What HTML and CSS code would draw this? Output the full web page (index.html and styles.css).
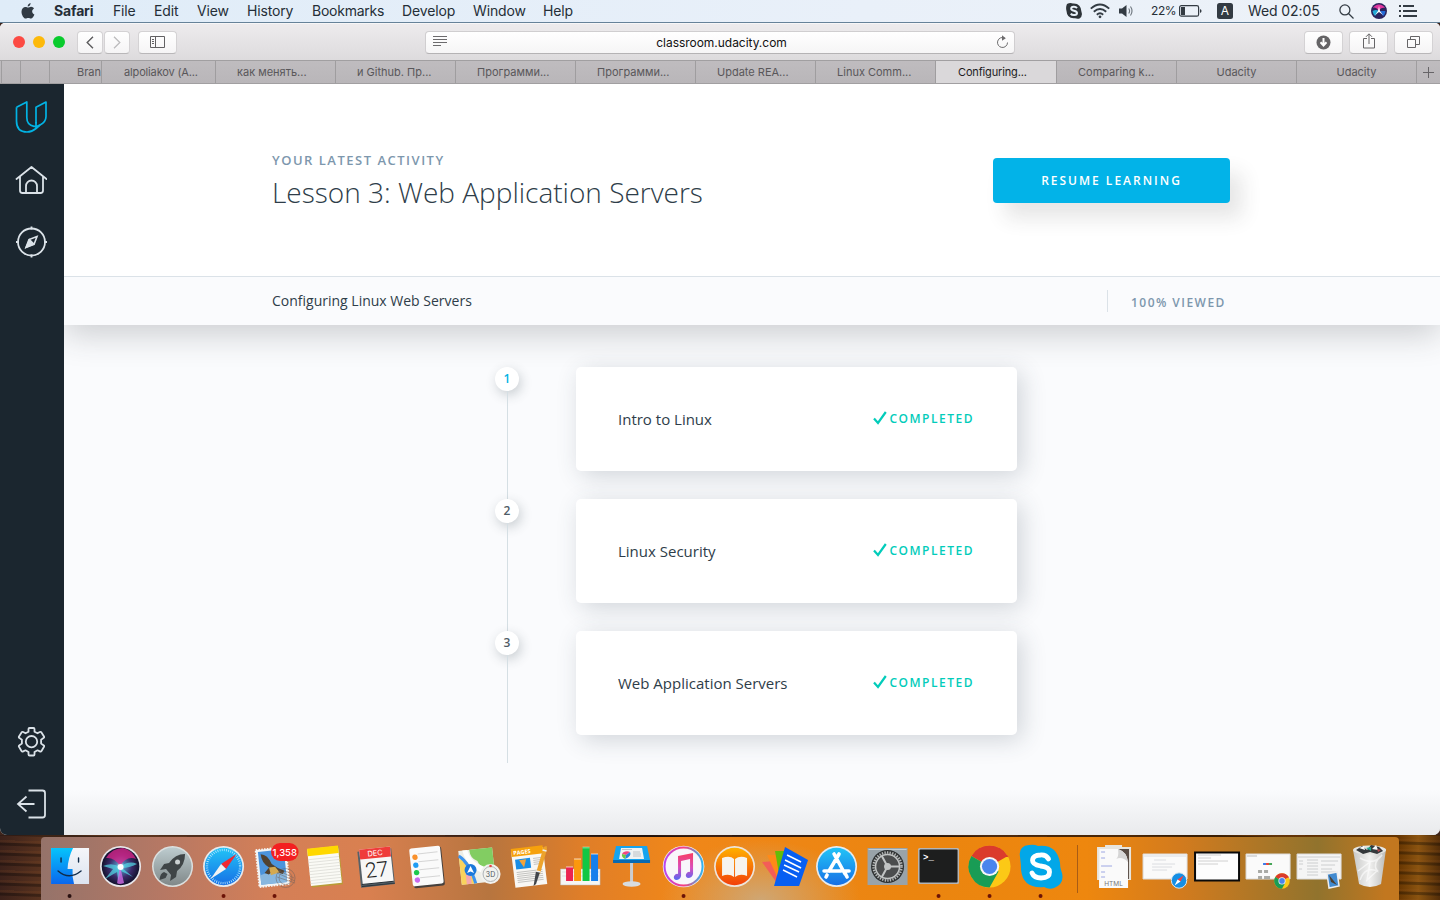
FILE: index.html
```html
<!DOCTYPE html>
<html lang="en">
<head>
<meta charset="utf-8">
<title>Udacity Classroom</title>
<link rel="stylesheet" href="styles.css">
</head>
<body>
<div class="desktop">
  <header class="menubar">
    <svg class="apple" width="14" height="16" viewBox="0 0 14 16"><path d="M9.6 0C9.700 1.800 8.300 3.500 6.700 3.500 6.500 1.800 8 .3 9.600 0zM7 4.600C7.800 4.600 8.700 3.800 10.100 3.800 11.300 3.900 12.400 4.500 13 5.400 10.300 7 10.800 10.400 13.400 11.400 12.700 13.400 11.300 15.600 10 15.600 8.900 15.600 8.500 15 7.300 15 6 15 5.600 15.600 4.600 15.600 2.800 15.600.5 12.100.5 8.800.5 5.600 2.500 3.900 4.400 3.900 5.600 3.900 6.300 4.600 7 4.600z" fill="#303a43"/></svg>
    <nav class="menus">
      <span class="m-app">Safari</span><span class="m-file">File</span><span class="m-edit">Edit</span><span class="m-view">View</span><span class="m-hist">History</span><span class="m-book">Bookmarks</span><span class="m-dev">Develop</span><span class="m-win">Window</span><span class="m-help">Help</span>
    </nav>
    <div class="status">
      <svg class="s-skype" width="16" height="16" viewBox="0 0 16 16"><path d="M1 1Q4-.5 7 .5 15 0 15.500 9 17 13 13.500 15.500 11 16 9 15.200 1 16 .5 8-.5 4 1 1z" fill="#2d3338"/><path d="M11 5.100C9.500 3.200 5.200 3.500 5.200 5.700 5.200 8.300 11 7.200 11 10 11 12.500 6.200 12.800 4.800 10.600" fill="none" stroke="#e8f0f8" stroke-width="2"/></svg>
      <svg class="s-wifi" width="20" height="16" viewBox="0 0 20 16" fill="none" stroke="#333b43" stroke-width="1.900"><path d="M.8 5.600Q10-2.600 19.200 5.600M3.800 8.700Q10 3.200 16.200 8.700M6.800 11.700Q10 9 13.200 11.700"/><circle cx="10" cy="13.800" r="1.400" fill="#333b43" stroke="none"/></svg>
      <svg class="s-vol" width="15" height="14" viewBox="0 0 15 14"><path d="M0 4.500h3L7.500 1v12L3 9.500H0z" fill="#333b43"/><path d="M9.700 4.500q1.800 2.500 0 5M11.500 2.500q3 4.500 0 9" fill="none" stroke="#6c747c" stroke-width="1.100"/></svg>
      <span class="battery-text">22%</span>
      <svg class="s-bat" width="23" height="12" viewBox="0 0 23 12"><rect x=".6" y=".6" width="19" height="10.600" rx="1.800" fill="none" stroke="#333b43" stroke-width="1.200"/><path d="M2 2h4v8H2z" fill="#333b43"/><path d="M21 4v4l1.400-1V5z" fill="#333b43"/></svg>
      <span class="input-source">A</span>
      <span class="clock">Wed 02:05</span>
      <svg class="s-search" width="15" height="15" viewBox="0 0 15 15" fill="none" stroke="#333b43" stroke-width="1.300"><circle cx="5.900" cy="5.900" r="5"/><path d="M9.500 9.500l5 5"/></svg>
      <svg class="s-siri" width="16" height="16" viewBox="0 0 16 16"><circle cx="8" cy="8" r="8" fill="#2b235c"/><path d="M2 5a7 7 0 0 1 12 0Q10 4 8 8 5 3 2 5z" fill="#e0359e"/><path d="M1.500 8Q5 6 8 8l-4 5Q2 11 1.500 8z" fill="#23a9d5"/><path d="M9 8l5.500 0Q14 12 12 13z" fill="#246bd7"/><path d="M8 3l1 5 3 4-4-3-4 3 3-4z" fill="#fff"/></svg>
      <svg class="s-list" width="18" height="12" viewBox="0 0 18 12" stroke="#333b43" stroke-width="1.900"><path d="M0 1h2M4 1h11M0 6h2M4 6h14M0 11h2M4 11h14"/></svg>
    </div>
  </header>

  <section class="window">
    <div class="toolbar">
      <div class="lights"><i class="red"></i><i class="yellow"></i><i class="green"></i></div>
      <div class="navbtns">
        <span class="btn nav"><svg width="8" height="13" viewBox="0 0 8 13" fill="none" stroke="#5d5c5e" stroke-width="1.400"><path d="M7 .8L1.200 6.500 7 12.200"/></svg></span>
        <span class="btn nav"><svg width="8" height="13" viewBox="0 0 8 13" fill="none" stroke="#bcbbbd" stroke-width="1.300"><path d="M1 .8l5.800 5.700L1 12.200"/></svg></span>
      </div>
      <span class="btn wide"><svg width="15" height="12" viewBox="0 0 15 12" fill="none" stroke="#626163"><path d="M.5.500h14v11H.5zM5.500.500v11M2 3.500h2M2 5.500h2M2 7.500h2"/></svg></span>
      <div class="address">
        <svg width="14" height="11" viewBox="0 0 14 11" stroke="#6c6b6d"><path d="M0 .5h14M0 3.500h14M0 6.500h14M0 9.500h8"/></svg>
        <span>classroom.udacity.com</span>
        <svg class="reload" width="13" height="14" viewBox="0 0 13 14" fill="none" stroke="#6c6b6d"><path d="M11.500 7.500a5 5 0 1 1-3-4.600"/><path d="M6 .3l3.800 2.900L6 5.800z" fill="#6c6b6d" stroke="none"/></svg>
      </div>
      <div class="actions">
        <span class="btn wide"><svg width="15" height="15" viewBox="0 0 15 15"><circle cx="7.500" cy="7.500" r="7" fill="#656466"/><path d="M7.500 3v7M4.500 7.300l3 3.200 3-3.200" fill="none" stroke="#fff" stroke-width="2"/></svg></span>
        <span class="btn wide"><svg class="share" width="12" height="16" viewBox="0 0 12 16" fill="none" stroke="#666567"><path d="M4 5.500H.5v9.500h11V5.500H8M6 11V1M3 3.800L6 .8l3 3"/></svg></span>
        <span class="btn wide"><svg width="13" height="12" viewBox="0 0 13 12" fill="none" stroke="#666567"><path d="M.5 3.500h8v8h-8zM3.500 3V.5h9v8H9"/></svg></span>
      </div>
    </div>
    <div class="tabs">
      <span class="tab t0"></span><span class="tab t1"></span><span class="tab t2"></span><span class="tab t3">Bran</span><span class="tab t4">alpoliakov (A...</span><span class="tab">как менять...</span><span class="tab">и Github. Пр...</span><span class="tab">Программи...</span><span class="tab">Программи...</span><span class="tab">Update REA...</span><span class="tab">Linux Comm...</span><span class="tab active">Configuring...</span><span class="tab">Comparing k...</span><span class="tab mid">Udacity</span><span class="tab mid">Udacity</span>
      <span class="plus"><svg width="11" height="11" viewBox="0 0 11 11" stroke="#666467"><path d="M5.500 0v11M0 5.500h11"/></svg></span>
    </div>

    <div class="page">
      <aside class="sidebar">
        <svg class="logo" width="32" height="32" viewBox="0 0 32 32" fill="none" stroke="#02b3e4" stroke-width="1.700" stroke-linejoin="round"><path d="M1.500 6.300L11.800 1V16.500Q11.800 24 19 25.300 22 25.800 25 24 31 21 31 15.500V1L21 6.300V22.500"/><path d="M1.500 6.300V20Q1.500 31 12 31 17 31 21 27.500L25 24M21 21V27.500"/></svg>
        <svg class="home" width="32" height="30" viewBox="0 0 32 30" fill="none" stroke="#dbe2e8" stroke-width="1.800" stroke-linejoin="round" stroke-linecap="round"><path d="M1.500 14L16.500 2l15 12M5 11.500V25.500Q5 28 7.500 28h18Q28 28 28 25.500V11.500M11 28V21a5.500 5.500 0 0 1 11 0v7"/></svg>
        <svg class="compass" width="32" height="32" viewBox="0 0 32 32" fill="none" stroke="#dbe2e8" stroke-width="1.800"><circle cx="16.500" cy="16" r="13.500"/><path d="M16.500 .5v3M16.500 28.500v3M1 16h3M29 16h3"/><path d="M22 10.500l-8 3-3 8 8-3z" stroke-width="1.600"/><path d="M14.500 14l2 2 2 2-7 3z" fill="#dbe2e8"/></svg>
        <svg class="gear" width="28" height="30" viewBox="0 0 28 30" fill="none" stroke="#dbe2e8" stroke-width="1.800" stroke-linejoin="round"><path d="M11.500 2Q11.500 1 12.500 1h4Q17.500 1 17.500 2v2.700L20.500 6.300 22.800 5Q23.800 4.500 24.300 5.300L27 9.500Q27.500 10.500 26.500 11.100L24.100 12.700v3.900L26.500 18.200Q27.500 18.900 27 19.800L24.500 24Q23.900 25 22.800 24.400L20.500 23.300 17.500 25V27.500Q17.500 28.500 16.500 28.500H12.500Q11.500 28.500 11.500 27.500V25L8.500 23.300 6.200 24.400Q5.100 25 4.500 24L2 19.800Q1.500 18.900 2.500 18.200L4.900 16.600V12.700L2.500 11.100Q1.500 10.500 2 9.500L4.700 5.300Q5.200 4.500 6.200 5L8.500 6.300 11.500 4.700z"/><circle cx="14.500" cy="14.700" r="5.700"/></svg>
        <svg class="exit" width="30" height="30" viewBox="0 0 30 30" fill="none" stroke="#dbe2e8" stroke-width="1.800"><path d="M12.500 1.500h14q2.500 0 2.500 2.500v22q0 2.500-2.500 2.500h-14M18.500 15H2.500M10.500 7.500L2 15l8.500 7.500"/></svg>
      </aside>
      <main class="content">
        <div class="hero">
          <div>
            <p class="eyebrow">YOUR LATEST ACTIVITY</p>
            <h1>Lesson 3: Web Application Servers</h1>
          </div>
          <a class="resume">RESUME LEARNING</a>
        </div>
        <div class="coursebar">
          <span class="course">Configuring Linux Web Servers</span>
          <span class="viewed">100% VIEWED</span>
        </div>
        <div class="lessons">
          <div class="row"><div class="rail"><b class="current">1</b></div><div class="card"><span>Intro to Linux</span><em><svg width="14" height="14" viewBox="0 0 14 14" fill="none" stroke="#02ccba" stroke-width="2.200"><path d="M1 7.500l4 4.500L12.800 1"/></svg>COMPLETED</em></div></div>
          <div class="row"><div class="rail"><b>2</b></div><div class="card"><span>Linux Security</span><em><svg width="14" height="14" viewBox="0 0 14 14" fill="none" stroke="#02ccba" stroke-width="2.200"><path d="M1 7.500l4 4.500L12.800 1"/></svg>COMPLETED</em></div></div>
          <div class="row"><div class="rail"><b>3</b></div><div class="card"><span>Web Application Servers</span><em><svg width="14" height="14" viewBox="0 0 14 14" fill="none" stroke="#02ccba" stroke-width="2.200"><path d="M1 7.500l4 4.500L12.800 1"/></svg>COMPLETED</em></div></div>
        </div>
      </main>
    </div>
  </section>

  <footer class="dockarea">
    <div class="dock">
      <svg class="slot" viewBox="0 0 51 63"><defs><linearGradient id="fb" x2="0" y2="1"><stop stop-color="#06c4fb"/><stop offset="1" stop-color="#0a67ee"/></linearGradient><linearGradient id="fw" x2="0" y2="1"><stop stop-color="#f5f6fa"/><stop offset="1" stop-color="#dce4f0"/></linearGradient></defs><path d="M7 11h38v36H7z" fill="url(#fw)"/><path d="M7 11h22Q24 21 23.500 32h5Q28 40 30 47H7z" fill="url(#fb)"/><path d="M17 21v4M34.500 21v4M14 34q11 9.500 23 0" fill="none" stroke="#102b49" stroke-width="1.400" stroke-linecap="round"/><circle cx="25.500" cy="59" r="2" fill="#291010"/></svg>
      <svg class="slot" viewBox="0 0 51 63"><defs><radialGradient id="siri"><stop stop-color="#e6fbff"/><stop offset=".25" stop-color="#4d7fb0"/><stop offset=".6" stop-color="#3a2a68"/><stop offset="1" stop-color="#12122c"/></radialGradient></defs><circle cx="25.500" cy="29.500" r="20.500" fill="#e9e7eb"/><circle cx="25.500" cy="29.500" r="18.800" fill="url(#siri)"/><path d="M11 21Q17 11 28 11q9 2 13 11-9-4-16 7-6-9-14-8z" fill="#df258c" opacity=".75"/><path d="M8 29q9-4 17 1 9-7 17-3-8 4-15 4l11 9-12-6-3 10-1-9-12 7 8-10z" fill="#52dce8" opacity=".7"/><path d="M25 29l4 17q-5 2-7 0z" fill="#d06be5" opacity=".8"/><circle cx="25.500" cy="30" r="3" fill="#fff"/></svg>
      <svg class="slot" viewBox="0 0 51 63"><defs><linearGradient id="silver" x2="0" y2="1"><stop stop-color="#bdcccf"/><stop offset="1" stop-color="#808889"/></linearGradient></defs><circle cx="25.500" cy="29.500" r="20.500" fill="#dce0df"/><circle cx="25.500" cy="29.500" r="19" fill="url(#silver)"/><path d="M38 17Q28 17 22 26l-5 1-4 6 6-1 5 6-1 6 6-4 1-6Q38 28 38 17zM17 35q-4 1-4.500 8l6-2 2-4z" fill="#3f4547"/><circle cx="30.500" cy="25" r="2.500" fill="#cbd1d2"/></svg>
      <svg class="slot" viewBox="0 0 51 63"><defs><linearGradient id="saf" x2="0" y2="1"><stop stop-color="#22c4f7"/><stop offset="1" stop-color="#176fe5"/></linearGradient></defs><circle cx="25.500" cy="29.500" r="20.500" fill="#e9eaec"/><circle cx="25.500" cy="29.500" r="18.800" fill="url(#saf)"/><circle cx="25.500" cy="29.500" r="16.600" fill="none" stroke="#b4e6ff" stroke-width="2.400" stroke-dasharray=".8 1.370"/><path d="M38.500 17L28 32l-5-5z" fill="#ef2932"/><path d="M12.500 42L28 32l-5-5z" fill="#f3f2f2"/><circle cx="25.500" cy="59" r="2" fill="#6b1307"/></svg>
      <svg class="slot" viewBox="0 0 51 63"><g transform="rotate(-6 24 30)"><path d="M8.500 11.500h30v37h-30z" fill="#f4f5f5" stroke="#f4f5f5" stroke-width="2" stroke-dasharray="1.600 1.200"/><path d="M10.500 13.500h26v33h-26z" fill="#4c94dc"/><path d="M10.500 37q13-4 26 0v9.500h-26z" fill="#88b7df"/><path d="M13 16q7 1 10 11 5 5 12 8l-2 3-9-4-5 3-4-2 5-5q-7-5-7-14z" fill="#51412f"/><path d="M20 30l6 0 4 6-9 2z" fill="#d5a94f"/></g><g fill="none" stroke="#6b605b" stroke-width=".8" opacity=".6"><circle cx="36.500" cy="41" r="9.500"/><circle cx="36.500" cy="41" r="6.500"/><path d="M28 36l18 8M28 40l18 6M30 34l15 7"/></g><rect x="22" y="6" width="27.500" height="18" rx="9" fill="#f31f21"/><text x="35.700" y="18.500" text-anchor="middle" class="badge-text">1,358</text><circle cx="25.500" cy="59" r="2" fill="#6b1307"/></svg>
      <svg class="slot" viewBox="0 0 51 63"><g transform="rotate(-6 25 30)"><path d="M10 11h31v38H10z" fill="#b99c36"/><path d="M9 10.500h31v37H9z" fill="#fafaf5"/><path d="M9 10h31v7.500H9z" fill="#ffd800"/><path d="M9 21h31M9 24h31M9 27h31M9 30h31M9 33h31M9 36h31M9 39h31M9 42h31M9 45h31" stroke="#ddddd8" stroke-width=".8"/></g></svg>
      <svg class="slot" viewBox="0 0 51 63"><g transform="rotate(-6 25 30)"><path d="M8 13h34v36H8z" fill="#566168"/><path d="M10 11h31v35H10z" fill="#f7f7f6"/><path d="M10 11h31v10H10z" fill="#ef3c3a"/><text x="25.500" y="18.800" text-anchor="middle" class="cal-month">DEC</text><text x="25.500" y="40" text-anchor="middle" class="cal-day">27</text><path d="M9 46h32M9 48h33" stroke="#293238"/></g></svg>
      <svg class="slot" viewBox="0 0 51 63"><g transform="rotate(-6 25 30)"><rect x="10" y="11" width="31" height="39" rx="2" fill="#46403d"/><rect x="9" y="10" width="31" height="38" rx="2" fill="#fafafa"/><path d="M17 16h20M17 24h20M17 32h20M17 40h20" stroke="#d5d5d5"/><circle cx="14" cy="19" r="2.700" fill="#f9912d"/><circle cx="14" cy="27" r="2.700" fill="#209cf3"/><circle cx="14" cy="34.500" r="2.700" fill="#1ec94b"/><circle cx="14" cy="42" r="2.700" fill="#ca68ed"/></g></svg>
      <svg class="slot" viewBox="0 0 51 63"><g transform="rotate(-6 25 30)"><path d="M7 12h34v34H7z" fill="#eeeee7"/><path d="M18 12h23v20q-14 1-16-8-7-3-7-12z" fill="#82cd62"/><path d="M7 20l8 4 7 22H7z" fill="#f9d35c"/><path d="M12 30h5v16h-5z" fill="#f5a8af"/><path d="M16 12q2 11 11 16t14 8v5Q14 34 11 12z" fill="#fff" opacity=".9"/><path d="M7 17q10 8 14 29" fill="none" stroke="#3d93ed" stroke-width="3"/></g><circle cx="17.500" cy="33" r="6" fill="#1c79db"/><path d="M17.500 29l-3.500 7 3.500-1.500L21 36z" fill="#fff"/><circle cx="37.500" cy="37" r="10" fill="#f2f2ef"/><circle cx="37.500" cy="37" r="7.500" fill="none" stroke="#b0b5b7"/><text x="37.500" y="39.500" text-anchor="middle" class="map-text">3D</text><circle cx="37.500" cy="29" r="1.300" fill="#e84340"/></svg>
      <svg class="slot" viewBox="0 0 51 63"><g transform="rotate(-7 25 30)"><path d="M9 12h32v37H9z" fill="#f8f7f4"/><path d="M9 10h32v8H9z" fill="#f6a10c"/><text x="11" y="16.300" class="pages-text">PAGES</text><path d="M12 21h15v10H12z" fill="#188de5"/><path d="M16 22l7 0-3 8z" fill="#f3a43b"/><path d="M30 22h9M30 24h9M30 26h9M30 28h9M12 34h26M12 36h26M12 38h26M12 40h26M12 42h26M12 44h26" stroke="#b9b9b6" stroke-width=".8"/></g><path d="M39.500 10l3-1 .5 3-7 25-4-1z" fill="#eda32c"/><path d="M32 34l4 1-4 12-2.500 2z" fill="#41454a"/><path d="M38.500 13l4 1M32 34l4.500 1" stroke="#eee" stroke-width="1.500"/></svg>
      <svg class="slot" viewBox="0 0 51 63"><path d="M5.500 32h39.500v16H5.500z" fill="#f5f5f3" stroke="#bbb" stroke-width=".5"/><path d="M7 35h37M7 39h37" stroke="#ddd"/><path d="M11 30h7v14h-7z" fill="#ec2450"/><path d="M19 22h7v22h-7z" fill="#fc980d"/><path d="M27.500 10h7v34h-7z" fill="#10c744"/><path d="M36 17h7v27h-7z" fill="#157fec"/><path d="M11 30h7M19 22h7M27.500 10.500h7M36 17h7" stroke="#fff" opacity=".35" stroke-width="2"/></svg>
      <svg class="slot" viewBox="0 0 51 63"><path d="M24 24h3v24h-3z" fill="#cbcdd0"/><ellipse cx="25.500" cy="47" rx="9" ry="2.700" fill="#d8dce0"/><path d="M10 9h31l3 14H7z" fill="#16a4ef"/><path d="M7 23h37v3H7z" fill="#0969b1"/><path d="M15 11h21l2 11H13z" fill="#f0f3f3"/><path d="M16 17a5 3 0 0 1 8-2l-4 3z" fill="#f24682"/><path d="M16 17l4 1-1 4q-4-2-3-5z" fill="#69c944"/><path d="M20 18l4-3q2 4-5 7z" fill="#2486dc"/><path d="M27 15h7M27 17h8M27 19h8M16 12.500h10" stroke="#b0b5ba" stroke-width=".8"/></svg>
      <svg class="slot" viewBox="0 0 51 63"><defs><linearGradient id="mus" x1="0" x2="1"><stop stop-color="#b847f0"/><stop offset=".5" stop-color="#fa3d7d"/><stop offset="1" stop-color="#32b5ef"/></linearGradient><linearGradient id="note" x2="0" y2="1"><stop stop-color="#f83d63"/><stop offset=".55" stop-color="#d94dbd"/><stop offset="1" stop-color="#5468f2"/></linearGradient></defs><circle cx="25.500" cy="29.500" r="20.800" fill="#eee"/><circle cx="25.500" cy="29.500" r="19" fill="#f8f7fb" stroke="url(#mus)" stroke-width="2"/><path d="M20 19l15-3v21q-1 4-5 4-3-1-2-4 2-3 4-2V22l-9 2v15q-1 4-5 4-3-1-2-4 2-3 4-2z" fill="url(#note)"/><circle cx="25.500" cy="59" r="2" fill="#6b1307"/></svg>
      <svg class="slot" viewBox="0 0 51 63"><defs><linearGradient id="books" x2="0" y2="1"><stop stop-color="#ffb000"/><stop offset="1" stop-color="#f2400b"/></linearGradient></defs><circle cx="25.500" cy="29.500" r="20.500" fill="#eee5dc"/><circle cx="25.500" cy="29.500" r="18.800" fill="url(#books)"/><path d="M13 21q8-3 12 1v18q-5-4-12-1zM26 22q5-4 12-1v18q-7-3-12 1z" fill="#f6f3ee"/></svg>
      <svg class="slot" viewBox="0 0 51 63"><path d="M2 25l14-1 3 25z" fill="#f35d58"/><path d="M7 18l13 0 2 31-3-5z" fill="#ff8a18"/><path d="M15 14l12 0-6 35z" fill="#63bd08"/><path d="M25 10l23 13-9 26H14z" fill="#075ff2"/><path d="M27 18l14 7M25 23l16 8M24 28l15 7M23 33l14 7" stroke="#fff" stroke-width="1.500"/></svg>
      <svg class="slot" viewBox="0 0 51 63"><circle cx="25.500" cy="29.500" r="20.500" fill="#e7ebef"/><circle cx="25.500" cy="29.500" r="18.800" fill="url(#saf)"/><path d="M23 17l11 20M28 17L18 34M13 34h17M33 34h5M16 38l-1 2M34 36l2 4" stroke="#fff" stroke-width="3.600" stroke-linecap="round"/></svg>
      <svg class="slot" viewBox="0 0 51 63"><path d="M5.500 11h40v37h-40z" fill="#99a3a9"/><path d="M6.500 12h38v1h-38z" fill="#c4cdd2"/><circle cx="25.500" cy="29.500" r="16.500" fill="#2d3031"/><circle cx="25.500" cy="29.500" r="14" fill="#4b4d4e" stroke="#b5b8b8" stroke-width="2.500" stroke-dasharray="1.300 1.300"/><circle cx="25.500" cy="29.500" r="12" fill="none" stroke="#c1c4c4" stroke-width="1.500"/><circle cx="25.500" cy="29.500" r="3.500" fill="#c1c4c4"/><path d="M25.500 29.500h12M25.500 29.500l-6-11M25.500 29.500l-6 11" stroke="#c1c4c4" stroke-width="2"/></svg>
      <svg class="slot" viewBox="0 0 51 63"><rect x="5" y="11" width="41" height="36" rx="1.500" fill="#b5b5b5"/><rect x="6.500" y="12.500" width="38" height="33" rx="1" fill="#1d1e1e"/><text x="10" y="23" class="term-text">&gt;_</text><circle cx="25.500" cy="59" r="2" fill="#6b1307"/></svg>
      <svg class="slot" viewBox="0 0 51 63"><g id="chrome"><circle cx="25.500" cy="29.500" r="21" fill="#fcc916"/><path d="M25.500 29.500L7.300 19a21 21 0 0 1 36.400 0z" fill="#db3b2c"/><path d="M25.500 29.500L7.300 19a21 21 0 0 0 18.200 31.500l9-16z" fill="#199c55"/><path d="M25.500 20h18.700L43 18H15z" fill="#db3b2c"/><circle cx="25.500" cy="29.500" r="9.600" fill="#f6f6f6"/><circle cx="25.500" cy="29.500" r="7.600" fill="#4985ed"/></g><circle cx="25.500" cy="59" r="2" fill="#6b1307"/></svg>
      <svg class="slot" viewBox="0 0 51 63"><path d="M5 20Q3 9 14 8q5-1 9 1 19-2 22 17 0 5 1 7 5 13-7 18-5 2-10-1Q8 52 6 33 6 27 5 20z" fill="#02a7e8"/><path d="M33.500 22Q31 17.500 25.500 18q-8 0-8 5.500 0 4 8 5.500 9 1 9 6 0 6-8.500 6-7 0-9-5" fill="none" stroke="#fff" stroke-width="4.800" stroke-linecap="round"/><circle cx="25.500" cy="59" r="2" fill="#6b1307"/></svg>
      <i class="divider"></i>
      <svg class="slot" viewBox="0 0 51 63"><path d="M9 10h8V8h17v2h9v33H9z" fill="#e7e5df"/><path d="M11 12h30v30H11z" fill="#584c45"/><path d="M11 12h19q9 3 10 13v26H11z" fill="#fafafa"/><path d="M30 12q1 8-2 10 6-3 12 3-1-10-10-13z" fill="#d6d6d6"/><path d="M13 15h4M13 21h4M13 29h11M13 35h4M13 40h4" stroke="#8793dd" stroke-width=".8"/><text x="25.500" y="49" text-anchor="middle" class="doc-text">HTML</text></svg>
      <svg class="slot" viewBox="0 0 51 63"><path d="M4 17h44v25H4z" fill="#fafafa" stroke="#ddd"/><path d="M5 19h42M15 23h12M13 27h23M13 30h20M13 33h15" stroke="#d3d6da" stroke-width=".8"/><circle cx="40" cy="43.500" r="7.700" fill="#168fe4" stroke="#dbe8ee"/><path d="M44.500 38.500l-3 6-3-2z" fill="#f34142"/><path d="M35.500 48.500l3-6 3 2z" fill="#fff"/></svg>
      <svg class="slot" viewBox="0 0 51 63"><rect x="4" y="15.500" width="44" height="28" fill="#fdfdfd" stroke="#090909" stroke-width="2"/><path d="M7 18h23M7 21h13M7 24h30M7 27h20" stroke="#c4c4c4" stroke-width=".8"/></svg>
      <svg class="slot" viewBox="0 0 51 63"><path d="M4 17h44v25H4z" fill="#fafafa" stroke="#ddd"/><path d="M5 19h10" stroke="#bbb"/><path d="M21 27h3" stroke="#3e7bea" stroke-width="2"/><path d="M24 27h3" stroke="#e84536" stroke-width="2"/><path d="M27 27h3" stroke="#45a658" stroke-width="2"/><path d="M16 33h4v3h-4zM22 33h4v3h-4zM16 39h4v3h-4zM22 39h6v3h-6z" fill="#a9aaa6"/><use href="#chrome" transform="translate(30.500 33) scale(.37)"/></svg>
      <svg class="slot" viewBox="0 0 51 63"><path d="M4 17h44v25H4z" fill="#f5f5f5" stroke="#ddd"/><path d="M5 20h42M6 24h4M6 27h4M6 32h3M14 23h11M14 26h11M14 29h11M14 32h11M14 35h11M14 38h11M28 24h17M28 28h14M28 32h11M28 35h15" stroke="#c8cbcc" stroke-width=".9"/><path d="M34 37l10-2 2 14-10 2z" fill="#428bd0" stroke="#eee" stroke-width="1.500"/><path d="M36 38l8 10-6-3z" fill="#4d4032"/></svg>
      <svg class="slot" viewBox="0 0 51 63"><defs><linearGradient id="trash"><stop stop-color="#c7c8c7"/><stop offset=".5" stop-color="#f1f1f0"/><stop offset="1" stop-color="#bcbcba"/></linearGradient></defs><path d="M9 13l33-1-5 35q-11 6-22 0z" fill="url(#trash)"/><ellipse cx="25.500" cy="13" rx="16.500" ry="4.500" fill="#e5e5e2"/><path d="M12 13l6-4 5 4 4-5 8 2 4 4-6 3-7-2-7 2z" fill="#34383b"/><path d="M15 11l5-2 1 4zM28 12l4-4 2 5z" fill="#f8f8f8"/><path d="M22 11l5-1 0 4z" fill="#21a893"/><path d="M33 12l4 1-3 2z" fill="#b74a4c"/><path d="M16 21q14 8 22-3-10 8-5 16-12-5-17 9M14 34l12-9-3 18 11-10" fill="none" stroke="#fff" opacity=".6" stroke-width="1.500"/></svg>
    </div>
  </footer>
</div>
</body>
</html>
```
FILE: styles.css
```css
* { box-sizing: border-box; }
body { margin: 0; font-family: "Open Sans", sans-serif; }
svg { display: block; flex: none; }
.desktop { width: 1440px; height: 900px; overflow: hidden; display: flex; flex-direction: column; background: #3d241b; }

.menubar { height: 23px; flex: none; display: flex; align-items: center; padding-left: 21px; background: linear-gradient(90deg, #dfecf8, #e9f0f9 60%, #edf2f8); border-bottom: 1px solid #668299; font: 14px/22px Inter, sans-serif; color: #252e37; }
.apple { margin-bottom: 1px; }
.menus { display: flex; margin-left: 19px; letter-spacing: -.15px; }
.menus span { white-space: nowrap; }
.m-app { width: 59px; font-weight: 700; letter-spacing: -.15px; }
.m-file { width: 41px; }
.m-edit { width: 43px; }
.m-view { width: 50px; }
.m-hist { width: 65px; }
.m-book { width: 90px; letter-spacing: -.25px; }
.m-dev { width: 71px; }
.m-win { width: 70px; }
.m-help { width: 40px; }
.status { display: flex; align-items: center; margin-left: auto; width: 374px; }
.s-wifi { margin-left: 8px; }
.s-vol { margin-left: 9px; }
.battery-text { margin-left: 17px; width: 28px; font-size: 12px; letter-spacing: -.4px; }
.input-source { width: 16px; height: 16px; margin-left: 15px; border-radius: 2.500px; background: #333b43; color: #fff; font-size: 12px; line-height: 16px; text-align: center; }
.clock { margin-left: 15px; width: 91px; letter-spacing: -.1px; white-space: nowrap; }
.s-siri { margin-left: 17px; }
.s-list { margin-left: 12px; }

.window { height: 812px; flex: none; display: flex; flex-direction: column; border-radius: 5px 5px 7px 7px; overflow: hidden; background: #fafbfd; }
.toolbar { height: 37px; flex: none; display: flex; align-items: center; padding: 1px 7px 0 13px; background: linear-gradient(#edebed, #dddbdd); border-top: 1px solid #f7f6f7; }
.lights { display: flex; gap: 8px; width: 64px; margin-top: -1px; }
.lights i { width: 12px; height: 12px; border-radius: 50%; }
.red { background: #fc4a43; }
.yellow { background: #fdb90a; }
.green { background: #09cb2d; }
.navbtns { display: flex; gap: 1px; }
.btn { height: 23px; display: flex; align-items: center; justify-content: center; border-radius: 4px; background: linear-gradient(#fff, #f5f4f5); border: 1px solid #d4d2d4; border-bottom-color: #b9b7b9; }
.btn svg { margin-bottom: 1px; }
.nav { width: 26px; }
.wide { width: 39px; }
.navbtns + .wide { margin-left: 8px; }
.address { width: 590px; height: 23px; margin-left: 248px; padding: 0 5px 0 7px; display: flex; align-items: center; justify-content: space-between; border: 1px solid #d0ced0; border-bottom-color: #b5b3b5; border-radius: 4px; background: linear-gradient(#fff, #f6f5f6); font: 12px/22px Inter, sans-serif; letter-spacing: -.03px; color: #111; }
.btn .share { margin-bottom: 3px; }
.address svg { margin-bottom: 2px; }
.actions { display: flex; gap: 6px; margin-left: auto; }
.tabs { height: 24px; flex: none; display: flex; background: linear-gradient(#bfbcbf, #b9b6b9); border-top: 1px solid #a19fa1; border-bottom: 1px solid #a19fa1; font: 11px/22px Inter, sans-serif; color: #59575a; }
.tab { width: 120px; flex: none; padding-left: 21px; border-right: 1px solid #9f9d9f; overflow: hidden; white-space: nowrap; }
.t0 { width: 2px; padding: 0; }
.t1 { width: 19px; padding: 0; }
.t2 { width: 29px; }
.t3 { width: 52px; padding-left: 27px; }
.t4 { width: 114px; padding-left: 22px; letter-spacing: -.15px; }
.tab.active { width: 121px; padding-left: 22px; background: #dad8da; color: #1d1c1e; letter-spacing: -.15px; }
.tab.mid { padding: 0; text-align: center; }
.plus { flex: 1; display: flex; align-items: center; justify-content: center; }

.page { height: 751px; display: flex; }
.sidebar { position: relative; z-index: 2; width: 64px; flex: none; background: #1b262f; display: flex; flex-direction: column; align-items: center; padding: 17px 2px 16px 0; }
.home { margin-top: 32px; }
.compass { margin-top: 31px; }
.gear { margin-top: auto; }
.exit { margin-top: 32px; }
.content { flex: 1; display: flex; flex-direction: column; background: linear-gradient(#fafbfd 94%, #e9eaec); }
.hero { position: relative; z-index: 1; height: 193px; flex: none; display: flex; justify-content: space-between; align-items: flex-start; padding: 66px 210px 0 208px; background: #fff; border-bottom: 1px solid #dbe2e8; }
.eyebrow { margin: 0; font-size: 13px; line-height: 20px; font-weight: 600; letter-spacing: 1.500px; color: #7d97ad; }
h1 { margin: 1px 0 0; font-size: 28px; line-height: 42px; font-weight: 300; color: #2e3d49; white-space: nowrap; }
.resume { width: 237px; height: 45px; margin-top: 8px; border-radius: 4px; background: #02b3e8; color: #fff; font-size: 12px; font-weight: 600; line-height: 45px; letter-spacing: 2px; text-align: center; box-shadow: 12px 15px 20px rgba(46, 46, 46, .12); }
.coursebar { height: 48px; flex: none; display: flex; align-items: center; justify-content: space-between; padding: 0 208px; background: #fafbfd; box-shadow: 0 10px 32px rgba(46, 50, 56, .22); color: #2e3d49; font-size: 14px; }
.course { margin-bottom: 2px; }
.viewed { width: 125px; height: 22px; padding: 2px 0 0 23px; border-left: 1px solid #dbe2e8; font-size: 12px; line-height: 22px; font-weight: 600; letter-spacing: 1.460px; color: #7d97ad; white-space: nowrap; }
.lessons { padding: 42px 0 0 431px; }
.row { display: flex; height: 132px; }
.rail { width: 24px; margin-right: 57px; display: flex; flex-direction: column; align-items: center; }
.rail::after { content: ""; width: 1px; flex: 1; margin-left: 1px; background: #d5dfe4; }
.rail b { width: 24px; height: 24px; border-radius: 50%; background: #fff; box-shadow: 2px 4px 12px rgba(46, 61, 73, .24); color: #4f5c66; font-size: 12px; line-height: 24px; font-weight: 600; text-align: center; }
.rail .current { color: #02b3e4; }
.card { width: 441px; height: 104px; padding: 0 43px 0 42px; display: flex; align-items: center; justify-content: space-between; border-radius: 5px; background: #fff; box-shadow: 5px 5px 25px rgba(46, 61, 73, .2); color: #2e3d49; font-size: 15px; }
.card > span { margin-bottom: 1px; }
.card em { display: flex; align-items: center; gap: 3px; font-style: normal; font-size: 12px; font-weight: 600; letter-spacing: 1.500px; color: #02ccba; margin-bottom: 2px; }

.dockarea { height: 65px; flex: none; padding: 2px 41px 0; background: repeating-linear-gradient(2deg, transparent 0 4px, rgba(0, 0, 0, .3) 5px 7px, rgba(160, 90, 40, .12) 8px 10px), linear-gradient(90deg, #3b211a, #59331f 3%, #2a160e 50%, #633300 97%, #8b5410 98.500%, #522d09); }
.dock { height: 63px; display: flex; padding-left: 3.400px; border-radius: 4px 4px 0 0; background: radial-gradient(ellipse 100px 60px at 53% 100%, rgba(196, 177, 147, .75), transparent), linear-gradient(90deg, #95736a, #b67864 9%, #d47f57 17%, #d98050 24%, #b7753f 33%, #e07e28 40%, #f08719 47%, #eb850f 65%, #ee870e 77%, #d27b1e 84%, #91732d 94%, #c2771f 99%); }
.slot { width: 51.100px; height: 63px; }
.divider { width: 1px; height: 48px; margin: 8px 10.500px 0 10.600px; background: #a85c16; }
.badge-text { font: 500 9.500px Inter, sans-serif; fill: #fff; }
.cal-month { font: 7.500px Inter, sans-serif; fill: #fff; }
.cal-day { font: 300 21px Roboto, sans-serif; fill: #222; }
.map-text { font: 7px Inter, sans-serif; fill: #4c5358; }
.pages-text { font: 700 5.500px "Open Sans", sans-serif; fill: #fff; }
.term-text { font: 700 9px "Liberation Mono", monospace; fill: #fff; }
.doc-text { font: 6.500px Inter, sans-serif; fill: #777; }
```
